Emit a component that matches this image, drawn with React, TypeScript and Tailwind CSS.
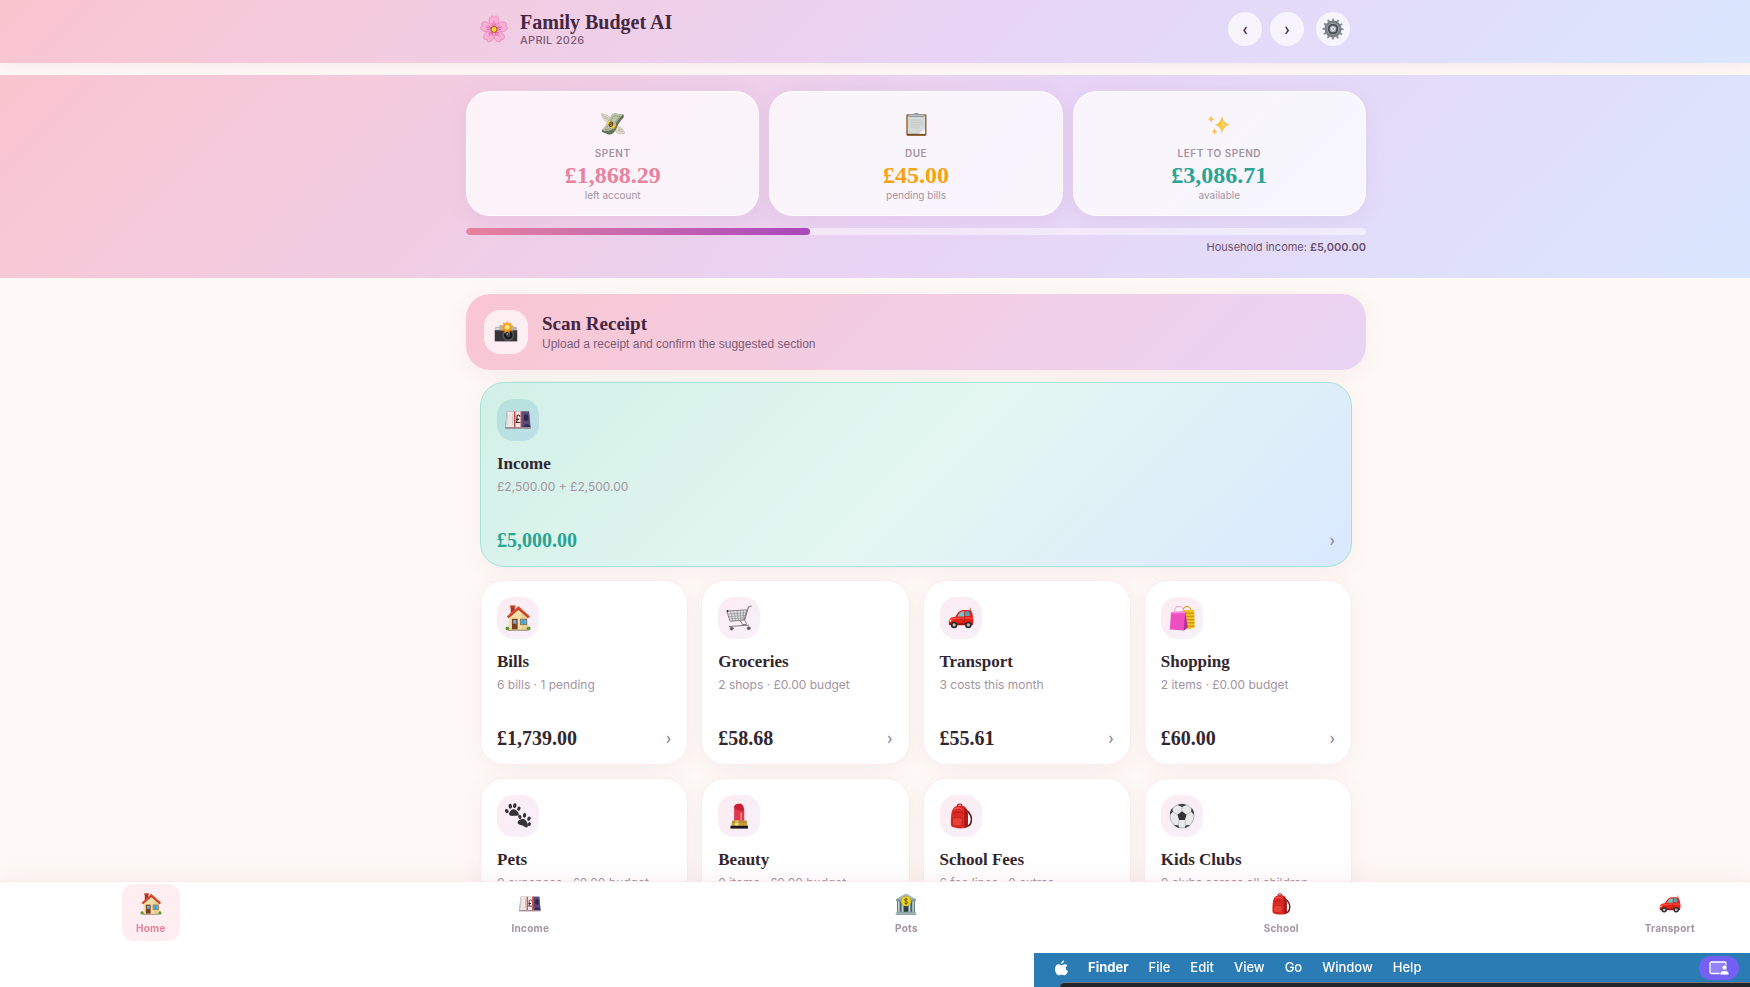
// App.tsx
import type { ReactNode } from "react";

type IconName =
  | "house"
  | "cart"
  | "car"
  | "bags"
  | "paws"
  | "lipstick"
  | "backpack"
  | "ball"
  | "pounds"
  | "bank"
  | "camera"
  | "wings"
  | "clipboard"
  | "sparkles"
  | "blossom"
  | "gear";

const ART: Record<IconName, ReactNode> = {
  house: (
    <>
      <rect x="7" y="1" width="5" height="9" fill="#a8321f" />
      <rect x="6.2" y="0.6" width="6.6" height="2.4" fill="#c8452c" />
      <path d="M5 14 17 4l11 10v16H5z" fill="#f3dfa6" />
      <path d="M20 8l8 7v15h-8z" fill="#e9cf90" />
      <path d="M16.5 1.5 30.5 14l-2 2.4L16.5 5.8 4.5 16.4l-2-2.4z" fill="#c2331f" />
      <path d="M16.5 1.5 30.5 14l-1 1.2L16.5 3.6 3.5 15.2l-1-1.2z" fill="#dd5a3e" />
      <rect x="8.5" y="17" width="7" height="13" fill="#7b3f20" />
      <rect x="10" y="18.5" width="4" height="4.5" fill="#6db2dd" />
      <rect x="18.5" y="17" width="8.5" height="7.5" fill="#8a6a3c" />
      <rect x="19.3" y="17.8" width="6.9" height="5.9" fill="#57aee6" />
      <path d="M22.7 17.8v5.9" stroke="#8a6a3c" strokeWidth="0.7" />
      <circle cx="3" cy="29" r="2.4" fill="#5a9a2f" />
      <circle cx="29" cy="29" r="2.4" fill="#5a9a2f" />
      <path d="M4 31h24" stroke="#9c8a68" strokeWidth="1.4" />
    </>
  ),
  cart: (
    <g fill="none" stroke="#7d787d" strokeLinecap="round" strokeLinejoin="round">
      <path d="M1.5 7.5 25.5 6l-3 12.5L5.5 20z" fill="#e6e3e6" strokeWidth="1.1" />
      <path d="M2.5 11l22-1.2M3.7 14.2l20-1.2M4.6 17.2l18.6-1.3" strokeWidth="0.7" />
      <path d="M5.5 7.5l3 12M9.5 7.2l2.5 12M13.5 7l1.6 12M17.5 6.6l.8 12M21.5 6.4l-.3 12" strokeWidth="0.7" />
      <path d="M31 1.2l-3.500 1.600-4.600 15.700" strokeWidth="1.3" />
      <path d="M18 20c1 2 2 2.500 2 4h5c1-2-1-3.500-2-5" strokeWidth="1.2" />
      <path d="M4 26.500 28 24.800" strokeWidth="1.200" />
      <circle cx="7" cy="29" r="1.9" fill="#4c464b" strokeWidth="0.9" />
      <circle cx="28" cy="28.6" r="1.9" fill="#4c464b" strokeWidth="0.9" />
      <circle cx="2" cy="7.4" r="1.1" fill="#2c272b" stroke="none" />
    </g>
  ),
  car: (
    <>
      <path d="M28 6.5l-1-3" stroke="#c43a2e" strokeWidth="0.9" />
      <path d="M1 21c0-5 4-6 8-6.6C12 8.500 15 6 20 6h6c3.500 0 4.500 5 5 10 .6 5 0 8-1 9H3c-1.600 0-2-2-2-4z" fill="#e32219" />
      <path d="M11.500 14.200C13.500 9.600 15.800 7.600 20 7.600V14z" fill="#6ec3cd" />
      <path d="M21.300 7.600h4.500l1.400 6h-5.900z" fill="#4fa7b5" />
      <path d="M2 18.500c3-2.500 18-2.800 29-2.200" fill="none" stroke="#ff6250" strokeWidth="1.200" />
      <path d="M20.600 14.500v9" stroke="#a9140f" strokeWidth="0.800" />
      <path d="M1.500 23.500h29" stroke="#8f120e" strokeWidth="1.800" />
      <ellipse cx="3" cy="19.600" rx="1.400" ry="1" fill="#ffe7a3" />
      <circle cx="7.500" cy="24.500" r="4" fill="#2a2a2d" />
      <circle cx="7.500" cy="24.500" r="2" fill="#b9bcc0" />
      <circle cx="25" cy="24.500" r="4" fill="#2a2a2d" />
      <circle cx="25" cy="24.500" r="2" fill="#b9bcc0" />
    </>
  ),
  bags: (
    <>
      <path d="M17.500 7c0-7 9-7 9.500 0" fill="none" stroke="#e2a51d" strokeWidth="1.300" />
      <path d="M17 6h14l.5 22-9 2z" fill="#f2c51c" />
      <path d="M18 10h13M19 14h12.300M20 18h11.400M20 22h11.500M21 26h10.500" stroke="#c9930e" strokeWidth="1.400" />
      <path d="M6.500 10c0-11 11-11 11.500-1" fill="none" stroke="#e9a8d0" strokeWidth="1.300" />
      <path d="M2.500 8.500 20 8l3 20-5 3.500L1 30z" fill="#ee4fc0" />
      <path d="M20 8l3 20-5 3.500z" fill="#b92f98" />
      <path d="M2.500 8.500 20 8l-.2 2L2.300 10.500z" fill="#f786d8" />
    </>
  ),
  paws: (
    <g fill="#37323a">
      <path d="M5 13.500c0-2.500 3-6.500 6-5.800 3 .6 6.500 4.300 6 6.600-.5 2-3.100 1-5.500 1.400-2.600.4-6.500.4-6.500-2.200z" />
      <ellipse cx="2.200" cy="10" rx="2.100" ry="2.700" transform="rotate(-25 2.200 10)" />
      <ellipse cx="6.500" cy="4" rx="2.100" ry="3" transform="rotate(-8 6.500 4)" />
      <ellipse cx="12" cy="3.300" rx="2.100" ry="3" transform="rotate(12 12 3.300)" />
      <ellipse cx="17" cy="7" rx="1.900" ry="2.600" transform="rotate(28 17 7)" />
      <path d="M15.500 24c.4-2.800 5.500-5 8.300-3.900 2.800 1.100 5.200 6.500 4.200 9-1 2-3.300.6-5.300-.8-2.200-1.500-7.500-1.500-7.200-4.300z" />
      <ellipse cx="18.300" cy="17" rx="2" ry="2.700" transform="rotate(-18 18.300 17)" />
      <ellipse cx="24" cy="15.300" rx="2" ry="2.900" transform="rotate(8 24 15.300)" />
      <ellipse cx="29.500" cy="19.300" rx="2" ry="2.700" transform="rotate(24 29.500 19.300)" />
      <ellipse cx="30" cy="26" rx="1.800" ry="2.500" transform="rotate(12 30 26)" />
    </g>
  ),
  lipstick: (
    <>
      <path d="M10 22V5c0-3 4-4.600 8-4 3 .5 4.500 5 4.500 9v12z" fill="#e2364a" />
      <path d="M10 5c1.500 3.500 8 5.500 12 5-.4-4-1.500-8.500-4.500-9-4-.6-7.500 1-7.500 4z" fill="#c71f38" />
      <path d="M18.500 12v9" stroke="#ff98a2" strokeWidth="1.800" />
      <path d="M7.500 21.500h18l.8 7H6.700z" fill="#c8a33b" />
      <path d="M11.500 21.500h4l-.4 7h-4.400z" fill="#f4dc87" />
      <path d="M7.300 23.500h18.400" stroke="#8c6a1b" strokeWidth="0.800" />
      <path d="M5.500 28h21.500v3.500H5.500z" fill="#1b191c" />
    </>
  ),
  backpack: (
    <>
      <path d="M22 9c5 2 8 9 6.500 14-.5 3-3 5.500-5.500 6" fill="none" stroke="#5e1d1a" strokeWidth="2" />
      <path d="M11.500 4c0-3.600 5.500-3.600 5.800-.4" fill="none" stroke="#a11b18" strokeWidth="1.500" />
      <path d="M4 14C5 6 9 3 15 3c6 0 9 4 9.500 11v15c-3 3-15 3-20 0C3 27 3.500 20 4 14z" fill="#db2a24" />
      <path d="M20 4.500c3 2 4.200 5 4.500 9.500v15c-1.300 1-2.500 1.500-4.500 1.800z" fill="#a81a1a" />
      <path d="M5.500 19c4-1.300 9-1.300 12 0v8.500c-4 1.200-9 1.200-12-.3z" fill="#ea4034" stroke="#b8211d" strokeWidth="0.900" />
      <path d="M6 12.500c4-1.500 9-1.500 13 0" fill="none" stroke="#a81a16" strokeWidth="1" />
      <path d="M7.500 8c3-2.500 7-2.500 10 0" fill="none" stroke="#f76d5c" strokeWidth="1.200" />
    </>
  ),
  ball: (
    <>
      <circle cx="16" cy="16" r="14.800" fill="#e9e9eb" stroke="#8b8b90" strokeWidth="0.700" />
      <path d="M16 10.300l5.600 4.100-2.100 6.600h-7l-2.100-6.600z" fill="#323237" />
      <path d="M10.500 2.400 16 5l5.500-2.600C18 .8 14 .8 10.500 2.400zM1.200 14.500l3.600-3.800-.6-5C2 8.500 1 11.500 1.200 14.500zM30.800 14.500l-3.600-3.800.6-5c2.200 2.800 3.200 5.800 3 8.800zM6 27l5.500.5 1.200 3C10 30 7.800 28.800 6 27zM26 27l-5.500.5-1.200 3c2.700-.5 4.900-1.700 6.700-3.500z" fill="#3c3c41" />
      <path d="M16 5v5.300M4.800 10.700l5.600 3.700M27.200 10.700l-5.600 3.700M11.500 27.500l1-6.500M20.500 27.500l-1-6.500" stroke="#a0a0a5" strokeWidth="0.700" />
    </>
  ),
  pounds: (
    <>
      <path d="M2 5.500h27.500L31.500 25v1.500H.5V25z" fill="#6d5c6f" />
      <path d="M2 5.500h9.500V25H.8z" fill="#ece7e4" />
      <path d="M3 8l-1 14M9.500 8v14" stroke="#bdb2b4" strokeWidth="0.900" />
      <path d="M20 5.500h9.600L31.200 25H20z" fill="#5a4a7a" />
      <ellipse cx="26" cy="13" rx="2.700" ry="4.200" fill="#2e284f" />
      <path d="M22 25c.5-5 8-6 8.800 0z" fill="#352d5a" />
      <path d="M11 5.500h9.500V25H11z" fill="#f4ebe8" />
      <path d="M12 5.500V26M20 5.500V26" stroke="#d1433f" strokeWidth="1.800" />
      <path d="M18.300 12c-.2-3-3.900-2.700-3.600.4.300 2.500.7 5-.7 6.700h4.800M13.600 15.300h3.900" fill="none" stroke="#3a2a2c" strokeWidth="1.400" />
      <path d="M.6 25.500h30.900" stroke="#a58b97" strokeWidth="1.500" />
    </>
  ),
  bank: (
    <>
      <path d="M16 1 30.500 9v3h-29V9z" fill="#7e9a9b" />
      <path d="M16 1 30.500 9h-29z" fill="#a3b9b6" />
      <path d="M3 12h26v16H3z" fill="#41646e" />
      <path d="M5.500 12.500v15M11 12.500v15M21 12.500v15M26.500 12.500v15" stroke="#c3d1cd" strokeWidth="2.700" />
      <rect x="13" y="19" width="6" height="9" fill="#2f3f45" />
      <path d="M2 28.500h28M1 31h30" stroke="#8ba4a3" strokeWidth="2.200" />
      <circle cx="16" cy="12" r="7" fill="#f7d51d" stroke="#c9a10b" strokeWidth="0.800" />
      <path d="M18.700 9.800c-.6-2-5-2-5.100.2-.1 2.300 5.100 1.500 5 3.900-.1 2.200-4.700 2.200-5.300 0M16 7v10" fill="none" stroke="#4c450f" strokeWidth="1.200" />
    </>
  ),
  camera: (
    <>
      <path d="M1.500 9.500 6 9l1.500-2h17L26 9l4.500.5V28h-29z" fill="#b7b3b1" />
      <path d="M1 14h30v14.500H1z" fill="#353437" />
      <path d="M1 14h30" stroke="#5a585c" strokeWidth="0.900" />
      <circle cx="19" cy="20" r="7.800" fill="#57565b" />
      <circle cx="19" cy="20" r="5.800" fill="#17171a" />
      <circle cx="19" cy="20" r="3" fill="#3c4553" />
      <circle cx="17.600" cy="18.500" r="1" fill="#cbd6e2" />
      <rect x="3" y="10.500" width="4" height="2" fill="#eeeceb" />
      <path d="M17.500 1l1.800 4 3.900-1.900-1.200 4.200 4.300.9-3.600 2.600 2.700 3.500-4.400-.3-.2 4.300-3.300-2.900-3.300 2.900-.2-4.300-4.400.3 2.700-3.500-3.600-2.600 4.300-.9-1.200-4.200L15.700 5z" fill="#f79b14" />
      <circle cx="17.500" cy="9.500" r="3.200" fill="#ffec8a" />
    </>
  ),
  wings: (
    <>
      <path d="M.5 2c3 1.500 7 1 10 3.500 2 1.500 3 3.500 2 5.500-1.500 2.500-5 2.500-7 .8C2.800 10 .5 6 .5 2z" fill="#dfdccb" stroke="#a9a894" strokeWidth="0.600" />
      <path d="M2 4.500l8 3.500M3.500 7.500l6 2.500" stroke="#a7a48c" strokeWidth="0.800" />
      <path d="M31.500 28.500c-4 .5-9 1-11.500-2-1.800-2.500-1-6 2-6.700 2.500-.5 5 .7 6.500 2.700s3 4 3 6z" fill="#dfdccb" stroke="#a9a894" strokeWidth="0.600" />
      <path d="M30 26.500l-7.500-2M28 23.500l-5-1" stroke="#a7a48c" strokeWidth="0.800" />
      <path d="M14 4.500C18-.5 22 4 30 3l.5 4c-4 4-6 7-9 12.500C19 25 17 30 10 30L1.500 26.500 1 23.500C6.500 22 10 9.500 14 4.500z" fill="#66735c" />
      <path d="M14 4.500C18-.5 22 4 30 3c-5 4-8 8-11 13.500C16 22 13 28 1 23.500 6.500 22 10 9.500 14 4.500z" fill="#bcc7a8" />
      <path d="M16.500 6c3-2 5.500 0 9 0-3.500 3-6 7-8.500 11.500C14 22 10 24.500 5.500 23 10 20 13 10.500 16.500 6z" fill="none" stroke="#7b896c" strokeWidth="0.900" />
      <path d="M9.500 11.500l10.500 4.500-.3 3.500-3.700 5.200-.2-3.200L6.700 17z" fill="#d79e25" />
      <path d="M9.500 11.500l10.500 4.500-4 6L6.700 17z" fill="#f4cd58" />
      <ellipse cx="13.300" cy="16.300" rx="3" ry="3.600" fill="#4e452c" transform="rotate(25 13.300 16.300)" />
      <path d="M14.600 15c-.6-1-2.600-.7-2.500.3.100 1.200 2.500.8 2.400 2-.1 1-2.200 1-2.600 0" fill="none" stroke="#f3d67b" strokeWidth="0.700" />
    </>
  ),
  clipboard: (
    <>
      <rect x="3" y="3" width="27" height="28.500" rx="1.500" fill="#9a6a36" />
      <rect x="5" y="5" width="23" height="24" fill="#d4d8d8" />
      <path d="M28 22v7h-8z" fill="#f6f8f8" />
      <path d="M9 11h15M9 14h15M9 17h15M9 20h12" stroke="#bcc1c2" strokeWidth="0.900" />
      <path d="M6 6.500V3.500h6.500C13 .4 20 .4 20.500 3.500H27v3z" fill="#8d979b" />
      <path d="M7 4.500h19" stroke="#c9d0d3" strokeWidth="1.200" />
      <path d="M4 30.500h25" stroke="#6b431d" strokeWidth="1.500" />
    </>
  ),
  sparkles: (
    <>
      <path d="M20 4c1 8 3.500 11 11 13-7.500 2-10 5-11 13-1-8-3.500-11-10-13 6.500-2 9-5 10-13z" fill="#fbc444" />
      <path d="M20 9c.6 5.200 2 7 6 8-4 1-5.400 2.800-6 8z" fill="#fdd96b" />
      <path d="M5.500 4c.5 3.500 1.500 4.700 4.500 5.500-3 .8-4 2-4.500 5.500C5 11.500 4 10.300 1 9.500c3-.8 4-2 4.500-5.500z" fill="#fbc05a" />
      <path d="M10 21c.5 3.200 1.500 4.400 4.300 5-2.800.8-3.800 2-4.300 5-.5-3-1.500-4.200-4-5 2.500-.6 3.500-1.800 4-5z" fill="#fbc05a" />
    </>
  ),
  blossom: (
    <>
      {[0, 72, 144, 216, 288].map((angle) => (
        <g key={angle} transform={`rotate(${angle} 16 16.500)`}>
          <path d="M16 15C10.500 11.500 8.700 5 12 2c1.500-1.500 3-.9 4 .8 1-1.700 2.500-2.300 4-.8 3.300 3 1.500 9.500-4 13z" fill="#f9b0d6" stroke="#e978b3" strokeWidth="0.700" />
          <path d="M16 14V7M16 14l-2.500-5M16 14l2.500-5" stroke="#d94f97" strokeWidth="0.800" />
        </g>
      ))}
      <circle cx="16" cy="16.500" r="3.800" fill="#c65a2b" />
      <circle cx="16" cy="16.500" r="2.700" fill="#fbd53c" />
    </>
  ),
  gear: (
    <>
      {[0, 30, 60, 90, 120, 150, 180, 210, 240, 270, 300, 330].map((angle) => (
        <path key={angle} d="M14.200 5 15.200.6h2.200l.6 4.400z" fill="#8a8f96" transform={`rotate(${angle} 16 16)`} />
      ))}
      <circle cx="16" cy="16" r="10.300" fill="none" stroke="#7b8087" strokeWidth="4" />
      <circle cx="16" cy="16" r="8" fill="#4b5057" />
      <circle cx="16" cy="16" r="4.800" fill="#aeb4bb" />
      <circle cx="16" cy="16" r="3" fill="#e9ecf4" />
      <path d="M15.500 14.500l2 1.500-2 1.500z" fill="#3f444b" />
    </>
  ),
};

function Icon({ name, className }: { name: IconName; className: string }) {
  return (
    <svg viewBox="0 0 32 32" className={className} aria-hidden="true">
      {ART[name]}
    </svg>
  );
}

interface Stat {
  icon: IconName;
  label: string;
  value: string;
  note: string;
  color: string;
}

const stats: Stat[] = [
  { icon: "wings", label: "SPENT", value: "£1,868.29", note: "left account", color: "text-[#e8829d]" },
  { icon: "clipboard", label: "DUE", value: "£45.00", note: "pending bills", color: "text-[#f5a30f]" },
  { icon: "sparkles", label: "LEFT TO SPEND", value: "£3,086.71", note: "available", color: "text-[#2aa493]" },
];

interface Section {
  icon: IconName;
  title: string;
  detail: string;
  amount?: string;
}

const sections: Section[] = [
  { icon: "house", title: "Bills", detail: "6 bills · 1 pending", amount: "£1,739.00" },
  { icon: "cart", title: "Groceries", detail: "2 shops · £0.00 budget", amount: "£58.68" },
  { icon: "car", title: "Transport", detail: "3 costs this month", amount: "£55.61" },
  { icon: "bags", title: "Shopping", detail: "2 items · £0.00 budget", amount: "£60.00" },
  { icon: "paws", title: "Pets", detail: "0 expenses · £0.00 budget" },
  { icon: "lipstick", title: "Beauty", detail: "0 items · £0.00 budget" },
  { icon: "backpack", title: "School Fees", detail: "6 fee lines · 0 extras" },
  { icon: "ball", title: "Kids Clubs", detail: "0 clubs across all children" },
];

const tabs: { icon: IconName; label: string; active?: boolean }[] = [
  { icon: "house", label: "Home", active: true },
  { icon: "pounds", label: "Income" },
  { icon: "bank", label: "Pots" },
  { icon: "backpack", label: "School" },
  { icon: "car", label: "Transport" },
];

const menus = ["File", "Edit", "View", "Go", "Window", "Help"];

function SectionCard({ icon, title, detail, amount, featured }: Section & { featured?: boolean }) {
  return (
    <button
      className={
        featured
          ? "col-span-4 flex min-h-[185px] flex-col rounded-3xl border border-[#a5e2d9] bg-linear-135 from-[#d2f0e7] via-[#e4f7f1] to-[#d9e8fe] px-4 pt-4 pb-3.5 text-left shadow-[0_4px_20px_rgba(150,80,100,0.07)]"
          : "flex min-h-[185px] flex-col rounded-3xl border border-[#fdecef] bg-white px-4 pt-4 pb-3.5 text-left shadow-[0_4px_20px_rgba(150,80,100,0.07)]"
      }
    >
      <span
        className={
          featured
            ? "flex size-[42px] items-center justify-center rounded-2xl bg-linear-135 from-[#b4e2da] to-[#bedfea]"
            : "flex size-[42px] items-center justify-center rounded-2xl bg-linear-135 from-[#fdecf1] to-[#f7f0fb]"
        }
      >
        <Icon name={icon} className="size-[26px]" />
      </span>
      <span className="mt-[11px] font-['Liberation_Serif',serif] text-[17px] leading-6 font-bold text-[#33262f]">
        {title}
      </span>
      <span className="text-xs leading-[22px] text-[#a394a2]">{detail}</span>
      {amount ? (
        <span className="mt-auto flex items-center justify-between">
          <span
            className={
              featured
                ? "font-['Liberation_Serif',serif] text-xl leading-6 font-bold text-[#2aa493]"
                : "font-['Liberation_Serif',serif] text-xl leading-6 font-bold text-[#33262f]"
            }
          >
            {amount}
          </span>
          <span className="font-[Roboto,sans-serif] text-lg leading-6 text-[#8f8090]">›</span>
        </span>
      ) : null}
    </button>
  );
}

function MenuBar() {
  return (
    <div className="ml-auto flex h-[34px] w-[716px] flex-col overflow-hidden bg-[#2b7bb5] font-[Inter,sans-serif] text-[13px] text-white">
      <div className="flex h-[29px] shrink-0 items-center gap-5 pr-[11px] pl-[21px]">
        <svg viewBox="0 0 24 28" className="h-4 w-[13px]" fill="currentColor" aria-hidden="true">
          <path d="M16.500 0c.3 3-2.300 6.300-5.300 6.200C10.800 3.300 13.600.3 16.500 0z" />
          <path d="M22.800 9.600c-4 2.500-3.600 8.200 1.200 10-1.200 3.400-3.700 7.900-6.300 8-2.200 0-2.800-1.300-5.300-1.300s-3.200 1.300-5.200 1.300C3.500 27.600 0 21.200 0 15.800 0 10.300 3.500 7.300 7 7.300c2.300 0 3.900 1.500 5.600 1.500 1.600 0 3.100-1.700 6-1.600 1.700.1 3.300.8 4.200 2.400z" />
        </svg>
        <button className="font-bold">Finder</button>
        {menus.map((menu) => (
          <button key={menu} className="font-medium">
            {menu}
          </button>
        ))}
        <button aria-label="Screen sharing" className="ml-auto flex h-6 w-10 items-center justify-center rounded-full bg-[#7560f6]">
          <svg viewBox="0 0 20 14" className="h-3.5 w-5" aria-hidden="true">
            <rect x="1" y="1" width="16" height="11.500" rx="1.500" fill="#9283fa" stroke="#fff" strokeWidth="1.300" />
            <path d="M11 14V12.500c0-4 9-4 9 0V14z" fill="#fff" stroke="#7560f6" strokeWidth="0.800" />
            <circle cx="15.500" cy="6.500" r="2.600" fill="#fff" stroke="#7560f6" strokeWidth="0.800" />
          </svg>
        </button>
      </div>
      <div className="ml-[26px] flex-1 rounded-tl-xl border-t border-[#75797d] bg-[#22252a]" />
    </div>
  );
}

export default function App() {
  return (
    <div className="h-screen overflow-hidden bg-[#fef9f6] font-[Inter,sans-serif]">
      <header className="bg-linear-135 from-[#fac5cf] via-[#e8d4f5] via-55% to-[#dae6ff] pt-3 pb-[15px] pl-[82px] shadow-[0_2px_16px_rgba(150,80,100,0.10)]">
        <div className="mx-auto flex max-w-[872px] items-start">
          <Icon name="blossom" className="mt-[3px] size-7" />
          <div className="ml-3">
            <h1 className="font-['Liberation_Serif',serif] text-xl leading-5 font-bold text-[#43263f]">Family Budget AI</h1>
            <p className="text-[11px] leading-4 font-medium tracking-wide text-[#7b5c78]">APRIL 2026</p>
          </div>
          <div className="ml-auto flex gap-2 font-[Roboto,sans-serif] text-[#43263f]">
            <button aria-label="Previous month" className="size-[34px] rounded-full bg-white/70 text-lg font-medium">
              ‹
            </button>
            <button aria-label="Next month" className="size-[34px] rounded-full bg-white/70 text-lg font-medium">
              ›
            </button>
            <button aria-label="Settings" className="ml-1 mr-0.5 flex size-[34px] items-center justify-center rounded-full bg-white/70">
              <Icon name="gear" className="size-[22px]" />
            </button>
          </div>
        </div>
      </header>

      <section className="mt-3 bg-linear-135 from-[#fac5cf] via-[#e8d4f5] via-55% to-[#dae6ff] pt-4 pb-[23px] pl-[82px]">
        <div className="mx-auto max-w-[900px]">
          <div className="grid grid-cols-3 gap-2.5">
            {stats.map((stat) => (
              <div
                key={stat.label}
                className="flex flex-col items-center rounded-3xl border border-white/90 bg-white/75 pt-5 pb-3.5 shadow-[0_4px_20px_rgba(180,110,170,0.12)]"
              >
                <Icon name={stat.icon} className="size-6" />
                <p className="mt-[9px] text-[10px] leading-4 font-semibold tracking-wider text-[#a394a2]">{stat.label}</p>
                <p className={`font-['Liberation_Serif',serif] text-2xl leading-7 font-bold ${stat.color}`}>{stat.value}</p>
                <p className="text-[10px] leading-3 text-[#a394a2]">{stat.note}</p>
              </div>
            ))}
          </div>
          <div className="mt-3 h-[7px] overflow-hidden rounded-full bg-white/50">
            <div className="h-full w-[38.2%] rounded-full bg-linear-to-r from-[#e8829d] to-[#ab47bc]" />
          </div>
          <p className="mt-1 text-right text-[11px] leading-4 text-[#6d4f6c]">
            Household income: <strong className="font-semibold">£5,000.00</strong>
          </p>
        </div>
      </section>

      <main className="pt-4 pl-[82px]">
        <div className="mx-auto max-w-[900px]">
          <button className="flex w-full items-center gap-3.5 rounded-3xl bg-linear-135 from-[#fac6d2] to-[#e9d4f5] px-[18px] py-4 text-left shadow-[0_4px_20px_rgba(150,80,100,0.08)]">
            <span className="flex size-11 items-center justify-center rounded-2xl bg-white/70">
              <Icon name="camera" className="size-6" />
            </span>
            <span className="flex flex-col">
              <span className="font-['Liberation_Serif',serif] text-[19px] leading-6 font-bold text-[#43263f]">Scan Receipt</span>
              <span className="font-['Liberation_Sans',sans-serif] text-xs leading-4 text-[#7b5c78]">
                Upload a receipt and confirm the suggested section
              </span>
            </span>
          </button>
          <div className="mt-3 grid grid-cols-4 gap-[13px] px-3.5">
            <SectionCard icon="pounds" title="Income" detail="£2,500.00 + £2,500.00" amount="£5,000.00" featured />
            {sections.map((section) => (
              <SectionCard key={section.title} {...section} />
            ))}
          </div>
        </div>
      </main>

      <div className="fixed inset-x-0 bottom-0 border-t border-[#fde8ec] bg-white shadow-[0_-4px_20px_rgba(150,80,100,0.07)]">
        <nav className="flex h-[71px] items-start justify-between pt-0.5 pr-[41px] pl-[122px]">
          {tabs.map((tab) => (
            <a
              key={tab.label}
              href={`#${tab.label.toLowerCase()}`}
              className={
                tab.active
                  ? "flex flex-col items-center rounded-xl bg-[#feeef2] px-3.5 pt-[9px] pb-[5px] text-[#e8829d]"
                  : "flex flex-col items-center rounded-xl px-3.5 pt-[9px] pb-[5px] text-[#a394a2]"
              }
            >
              <Icon name={tab.icon} className="size-[22px]" />
              <span className="mt-[5px] text-[10px] leading-4 font-bold tracking-wide">{tab.label}</span>
            </a>
          ))}
        </nav>
        <MenuBar />
      </div>
    </div>
  );
}
